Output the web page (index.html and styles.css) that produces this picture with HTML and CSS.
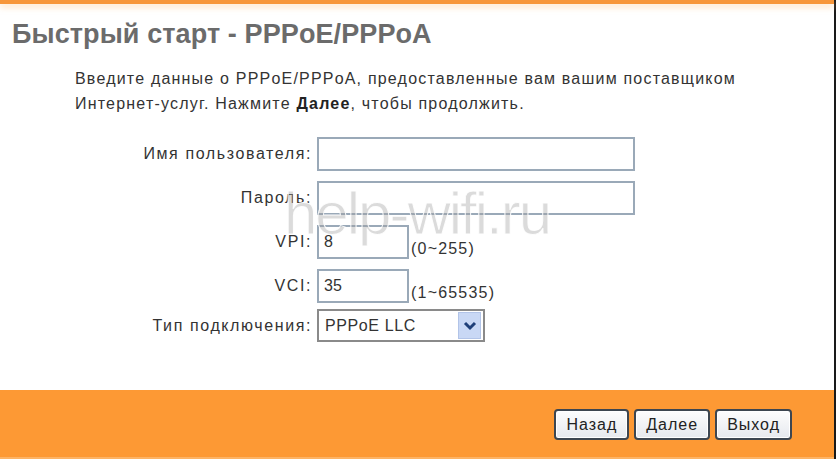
FILE: index.html
```html
<!DOCTYPE html>
<html lang="ru">
<head>
<meta charset="utf-8">
<title>Быстрый старт - PPPoE/PPPoA</title>
<link rel="stylesheet" href="styles.css">
</head>
<body>
<div class="page">
  <div class="topbar"></div>
  <div class="content">
    <h1 class="title">Быстрый старт - PPPoE/PPPoA</h1>
    <p class="intro">Введите данные о PPPoE/PPPoA, предоставленные вам вашим поставщиком<br>Интернет-услуг. Нажмите <b>Далее</b>, чтобы продолжить.</p>
    <form class="form">
      <label class="lbl">Имя пользователя:</label>
      <div class="field"><input class="inp inp-wide" type="text"></div>
      <label class="lbl">Пароль:</label>
      <div class="field"><input class="inp inp-wide" type="password"></div>
      <label class="lbl">VPI:</label>
      <div class="field"><input class="inp inp-short" type="text" value="8"><span class="range">(0~255)</span></div>
      <label class="lbl">VCI:</label>
      <div class="field"><input class="inp inp-short" type="text" value="35"><span class="range">(1~65535)</span></div>
      <label class="lbl lbl-select">Тип подключения:</label>
      <div class="field field-select">
        <div class="select">
          <span class="select-text">PPPoE LLC</span>
          <span class="select-btn"><svg width="14" height="10" viewBox="0 0 14 10"><path d="M2 2 L7 7 L12 2" fill="none" stroke="#1f3f78" stroke-width="3"/></svg></span>
        </div>
      </div>
    </form>
    <div class="watermark">help-wifi.ru</div>
  </div>
  <div class="footer">
    <button class="btn" type="button">Назад</button>
    <button class="btn" type="button">Далее</button>
    <button class="btn" type="button">Выход</button>
  </div>
</div>
</body>
</html>
```
FILE: styles.css
```css
html, body {
  margin: 0;
  padding: 0;
  background: #fff;
}
body {
  font-family: "Liberation Sans", Arial, sans-serif;
  color: #333;
}
.page {
  width: 834px;
  height: 459px;
  border-right: 2px solid #1a1a1a;
  display: flex;
  flex-direction: column;
  background: #fff;
}
.topbar {
  height: 4px;
  background: #f7963a;
  box-shadow: 0 3px 6px rgba(255, 200, 140, 0.6);
}
.content {
  flex: 1;
  position: relative;
}
.title {
  margin: 14px 0 0 12px;
  font-size: 27px;
  font-weight: bold;
  color: #6b6b6b;
  letter-spacing: 0.1px;
  line-height: 32px;
}
.intro {
  margin: 16px 0 0 75px;
  font-size: 16px;
  line-height: 25px;
  letter-spacing: 1.2px;
  color: #333;
}
.intro b {
  color: #222;
}
.form {
  margin-top: 21px;
  display: grid;
  grid-template-columns: 312px 1fr;
  column-gap: 5px;
  row-gap: 10px;
}
.lbl {
  text-align: right;
  font-size: 16px;
  letter-spacing: 1.6px;
  color: #333;
  align-self: center;
}
.field {
  display: flex;
  align-items: flex-end;
}
.lbl-select,
.field-select {
  margin-top: -4px;
}
.inp {
  box-sizing: border-box;
  height: 34px;
  border: 2px solid #9aa9b8;
  padding: 2px 5px;
  font-family: "Liberation Sans", Arial, sans-serif;
  font-size: 16px;
  color: #333;
  background: #fff;
  margin: 0;
}
.inp-wide {
  width: 318px;
}
.inp-short {
  width: 92px;
}
.range {
  font-size: 16px;
  letter-spacing: 1.2px;
  margin-left: 2px;
  margin-bottom: 1px;
  color: #333;
}
.select {
  box-sizing: border-box;
  width: 168px;
  height: 33px;
  border: 2px solid #8a8a8a;
  display: flex;
  align-items: center;
  justify-content: space-between;
  padding: 0 2px 0 6px;
  background: #fff;
}
.select-text {
  font-size: 16px;
  letter-spacing: 0.6px;
  color: #333;
}
.select-btn {
  width: 21px;
  height: 25px;
  background: #c9d8f5;
  border: 1px solid #b2c4e8;
  display: flex;
  align-items: center;
  justify-content: center;
}
.watermark {
  position: absolute;
  left: 284px;
  top: 175px;
  font-size: 60px;
  letter-spacing: -2px;
  color: rgba(160, 160, 160, 0.38);
  -webkit-text-stroke: 1px rgba(255, 255, 255, 0.9);
  pointer-events: none;
}
.footer {
  height: 67px;
  background: #fd9934;
  border-bottom: 2px solid #fdb365;
  display: flex;
  align-items: center;
  justify-content: flex-end;
  gap: 5px;
  padding-right: 42px;
}
.btn {
  height: 31px;
  padding: 0 10px;
  font-family: "Liberation Sans", Arial, sans-serif;
  font-size: 16px;
  letter-spacing: 1px;
  color: #222;
  border: 2px solid #3d4650;
  border-radius: 4px;
  background: linear-gradient(#fdfdfd, #e6e9ee);
  box-shadow: inset 0 0 0 1px #fff;
  margin-top: 2px;
}
```
